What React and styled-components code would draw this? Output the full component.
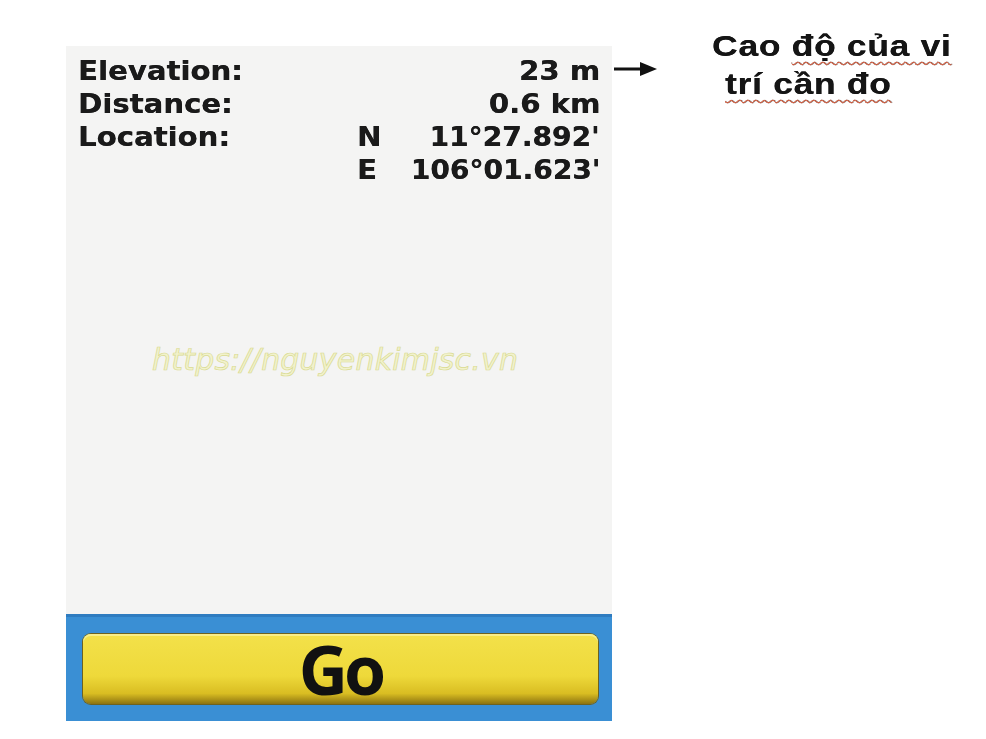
import React from 'react';
import styled, { createGlobalStyle } from 'styled-components';

const GlobalStyle = createGlobalStyle`
  html, body {
    margin: 0;
    padding: 0;
    background: #ffffff;
  }
  body {
    font-family: 'DejaVu Sans', sans-serif;
  }
`;

const Page = styled.div`
  width: 986px;
  height: 739px;
  display: flex;
  align-items: flex-start;
  padding: 46px 0 0 66px;
  box-sizing: border-box;
  overflow: hidden;
`;

const Device = styled.div`
  width: 546px;
  height: 675px;
  background: #f4f4f3;
  display: flex;
  flex-direction: column;
`;

const Info = styled.div`
  flex: 1;
  display: grid;
  grid-template-columns: 279px 40px 1fr;
  grid-auto-rows: 33px;
  padding: 8px 12px 0 12px;
  font-family: 'DejaVu Sans', sans-serif;
  font-weight: bold;
  font-size: 27px;
  color: #1a1a1a;
  position: relative;
`;

const Cell = styled.div`
  line-height: 33px;
  text-align: ${(p) => (p.$right ? 'right' : 'left')};
  white-space: nowrap;
`;

const Stretch = styled.span`
  display: inline-block;
  transform: scaleX(${(p) => p.$x || 1.08});
  transform-origin: ${(p) => (p.$right ? 'right' : 'left')} center;
  text-shadow: 0.3px 0 0 currentColor;
`;

const Watermark = styled.div`
  position: absolute;
  left: 86px;
  top: 296px;
  font-family: 'DejaVu Sans', sans-serif;
  font-style: italic;
  font-weight: normal;
  font-size: 30px;
  letter-spacing: 0.2px;
  color: #f2f2cc;
  -webkit-text-stroke: 0.7px #d9db92;
`;

const ButtonBar = styled.div`
  height: 107px;
  background: #3a8fd4;
  border-top: 3px solid #2f7cc0;
  box-sizing: border-box;
  display: flex;
  align-items: center;
  padding: 0 14px 0 17px;
`;

const GoButton = styled.div`
  flex: 1;
  height: 70px;
  border-radius: 8px;
  background: linear-gradient(#f3e14a 0%, #eed93a 60%, #d9bd22 85%, #8c7310 100%);
  box-shadow: inset 0 2px 0 #f8ee8a, 0 0 0 1px #6d6220;
  display: flex;
  align-items: center;
  justify-content: center;
  font-family: 'Open Sans', sans-serif;
  font-weight: bold;
  font-size: 68px;
  line-height: 70px;
  color: #111;
  letter-spacing: -4px;
`;

const Note = styled.div`
  display: flex;
  align-items: flex-start;
`;

const Arrow = styled.svg`
  margin-top: 15px;
  margin-right: 54px;
  flex-shrink: 0;
`;

const NoteText = styled.div`
  margin-top: -19px;
  font-family: 'Liberation Sans', Arial, sans-serif;
  font-weight: bold;
  font-size: 30px;
  line-height: 38px;
  letter-spacing: 0.6px;
  color: #151515;
  white-space: nowrap;
`;

const NoteLine = styled.div`
  padding-left: ${(p) => p.$indent || 0}px;
`;

const Squiggle = styled.span`
  text-decoration: underline wavy #e2684a;
  text-decoration-thickness: 1px;
  text-underline-offset: 5px;
`;

const rows = [
  { label: 'Elevation:', hemi: '', value: '23 m' },
  { label: 'Distance:', hemi: '', value: '0.6 km' },
  { label: 'Location:', hemi: 'N', value: "11°27.892'" },
  { label: '', hemi: 'E', value: "106°01.623'" },
];

export default function App() {
  return (
    <>
      <GlobalStyle />
      <Page>
        <Device>
          <Info>
            {rows.map((r, i) => (
              <React.Fragment key={i}>
                <Cell>
                  <Stretch>{r.label}</Stretch>
                </Cell>
                <Cell>
                  <Stretch>{r.hemi}</Stretch>
                </Cell>
                <Cell $right>
                  <Stretch $right $x={r.value.length > 8 ? 1.04 : 1.08}>
                    {r.value}
                  </Stretch>
                </Cell>
              </React.Fragment>
            ))}
            <Watermark>https://nguyenkimjsc.vn</Watermark>
          </Info>
          <ButtonBar>
            <GoButton>Go</GoButton>
          </ButtonBar>
        </Device>
        <Note>
          <Arrow width="46" height="16" viewBox="0 0 46 16">
            <rect x="2" y="6.5" width="28" height="3" fill="#111" />
            <path d="M28 1 L45 8 L28 15 Z" fill="#111" />
          </Arrow>
          <NoteText>
            <NoteLine>
              <Stretch $x={1.18}>
                Cao <Squiggle>độ của vi</Squiggle>
              </Stretch>
            </NoteLine>
            <NoteLine $indent={13}>
              <Stretch $x={1.18}>
                <Squiggle>trí cần đo</Squiggle>
              </Stretch>
            </NoteLine>
          </NoteText>
        </Note>
      </Page>
    </>
  );
}
